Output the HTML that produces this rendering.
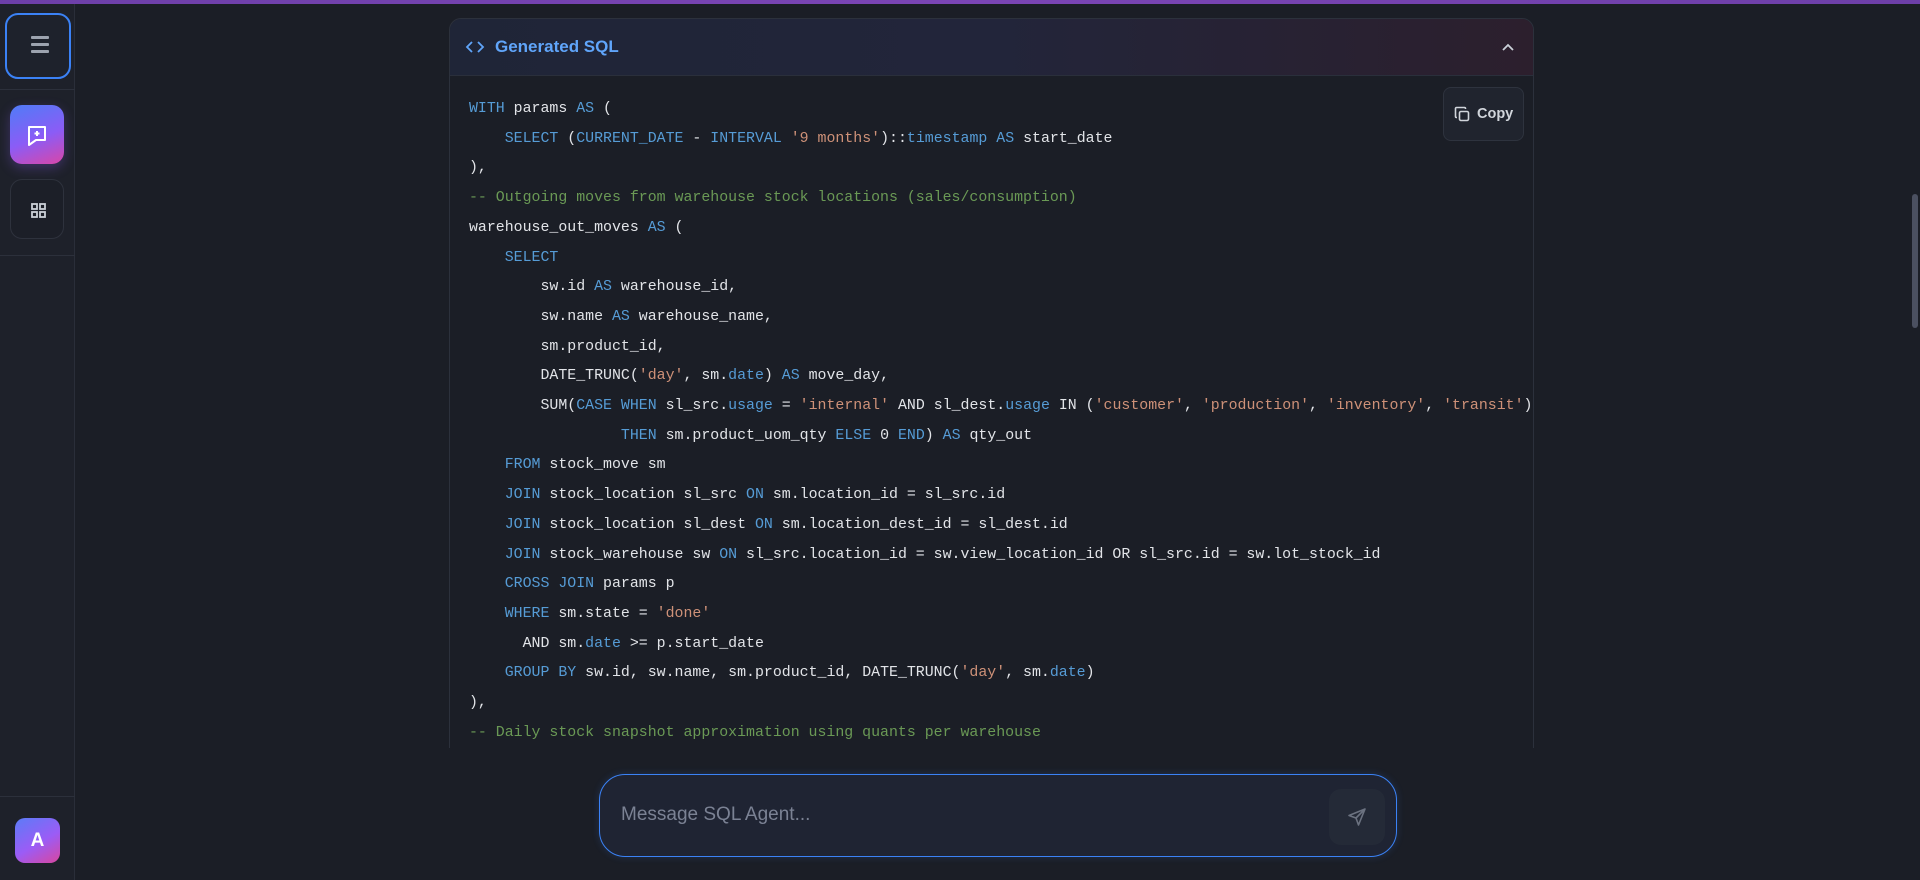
<!DOCTYPE html>
<html><head><meta charset="utf-8">
<style>
*{box-sizing:border-box;margin:0;padding:0}
html,body{width:1920px;height:880px;overflow:hidden;background:#1b1e26;font-family:"Liberation Sans",sans-serif}
.topbar{position:absolute;left:0;top:0;width:1920px;height:4px;background:linear-gradient(90deg,#6d3fa8,#7b45b5,#6d3fa8)}
.side{position:absolute;left:0;top:4px;width:75px;height:876px;background:#1e212a;border-right:1px solid #2a2e39}
.hb{position:absolute;left:5px;top:9px;width:66px;height:66px;border:2px solid #3b82f6;border-radius:13px;background:#1e222c}
.hb i{position:absolute;left:24px;width:18px;height:2.5px;background:#9ca3af;border-radius:1px}
.div{position:absolute;left:0;width:75px;height:1px;background:#2c303b}
.chat{position:absolute;left:10px;top:101px;width:54px;height:59px;border-radius:12px;background:linear-gradient(160deg,#4f7cf7,#8b5cf6 55%,#d946a8);box-shadow:0 4px 12px rgba(139,92,246,.3)}
.grid{position:absolute;left:10px;top:175px;width:54px;height:60px;border-radius:12px;border:1px solid #2e323d;background:#1c1f28}
.av{position:absolute;left:15px;top:814px;width:45px;height:45px;border-radius:10px;background:linear-gradient(150deg,#5b7cf7,#9b5cf6 55%,#d9469f);color:#fff;font-weight:bold;font-size:19px;text-align:center;line-height:45px}
.main{position:absolute;left:76px;top:4px;right:0;height:744px;overflow:hidden}
.card{position:absolute;left:373px;top:14px;width:1085px;height:900px;border:1px solid #2c313c;border-radius:12px;background:#1b1e26;overflow:hidden}
.head{height:57px;background:linear-gradient(90deg,#1f2537,#22253a 50%,#2c1f2d);border-bottom:1px solid #2a2f3b;position:relative}
.head .t{position:absolute;left:45px;top:18px;color:#60a5fa;font-size:17px;font-weight:bold}
.code{position:absolute;left:19px;top:76px;font-family:"Liberation Mono",monospace;font-size:14.9px;line-height:29.7px;color:#e2e4e8;white-space:pre}
.k{color:#569cd6}.s{color:#ce9178}.c{color:#6a9955}
.copy{position:absolute;left:993px;top:68px;width:81px;height:54px;border:1px solid #2e333e;border-radius:8px;background:#20242e;color:#d1d5db;font-size:14.5px;font-weight:bold}
.sb{position:absolute;right:0;top:4px;width:10px;height:744px;background:#1b1e26}
.thumb{position:absolute;right:2px;top:190px;width:6px;height:134px;background:#4b5060;border-radius:3px}
.inp{position:absolute;left:599px;top:774px;width:798px;height:83px;border:1.5px solid #3b82f6;border-radius:26px;background:#1f2433;box-shadow:0 0 8px rgba(59,130,246,.2)}
.inp span{position:absolute;left:21px;top:29px;color:#7b8294;font-size:19px}
.send{position:absolute;left:729px;top:14px;width:56px;height:56px;border-radius:12px;background:#242a37}
</style></head><body>
<div class="topbar"></div>
<div class="side">
 <div class="hb"><i style="top:21px"></i><i style="top:28px"></i><i style="top:35px"></i></div>
 <div class="div" style="top:85px"></div>
 <div class="chat"><svg width="54" height="59" viewBox="0 0 54 59"><path d="M19 22h16v13h-9l-7 5z" fill="none" stroke="#fff" stroke-width="2" stroke-linejoin="round"/><path d="M27 26v5M24.5 28.5h5" stroke="#fff" stroke-width="2"/></svg></div>
 <div class="grid"><svg width="54" height="60" viewBox="0 0 54 60"><g fill="none" stroke="#cbd0d8" stroke-width="1.8"><rect x="21" y="24" width="5" height="5"/><rect x="29" y="24" width="5" height="5"/><rect x="21" y="32" width="5" height="5"/><rect x="29" y="32" width="5" height="5"/></g></svg></div>
 <div class="div" style="top:251px"></div>
 <div class="div" style="top:792px"></div>
 <div class="av">A</div>
</div>
<div class="main">
 <div class="card">
  <div class="head">
   <svg style="position:absolute;left:15px;top:19px" width="20" height="18" viewBox="0 0 20 18"><path d="M7 4L2 9l5 5M13 4l5 5-5 5" fill="none" stroke="#60a5fa" stroke-width="1.8"/></svg>
   <div class="t">Generated SQL</div>
   <svg style="position:absolute;left:1050px;top:21px" width="16" height="14" viewBox="0 0 16 14"><path d="M3 10l5-5 5 5" fill="none" stroke="#cbd0d8" stroke-width="1.8"/></svg>
  </div>
<div class="code"><span class="k">WITH</span> params <span class="k">AS</span> (
    <span class="k">SELECT</span> (<span class="k">CURRENT_DATE</span> - <span class="k">INTERVAL</span> <span class="s">'9 months'</span>)::<span class="k">timestamp</span> <span class="k">AS</span> start_date
),
<span class="c">-- Outgoing moves from warehouse stock locations (sales/consumption)</span>
warehouse_out_moves <span class="k">AS</span> (
    <span class="k">SELECT</span>
        sw.id <span class="k">AS</span> warehouse_id,
        sw.name <span class="k">AS</span> warehouse_name,
        sm.product_id,
        DATE_TRUNC(<span class="s">'day'</span>, sm.<span class="k">date</span>) <span class="k">AS</span> move_day,
        SUM(<span class="k">CASE</span> <span class="k">WHEN</span> sl_src.<span class="k">usage</span> = <span class="s">'internal'</span> AND sl_dest.<span class="k">usage</span> IN (<span class="s">'customer'</span>, <span class="s">'production'</span>, <span class="s">'inventory'</span>, <span class="s">'transit'</span>)
                 <span class="k">THEN</span> sm.product_uom_qty <span class="k">ELSE</span> 0 <span class="k">END</span>) <span class="k">AS</span> qty_out
    <span class="k">FROM</span> stock_move sm
    <span class="k">JOIN</span> stock_location sl_src <span class="k">ON</span> sm.location_id = sl_src.id
    <span class="k">JOIN</span> stock_location sl_dest <span class="k">ON</span> sm.location_dest_id = sl_dest.id
    <span class="k">JOIN</span> stock_warehouse sw <span class="k">ON</span> sl_src.location_id = sw.view_location_id OR sl_src.id = sw.lot_stock_id
    <span class="k">CROSS JOIN</span> params p
    <span class="k">WHERE</span> sm.state = <span class="s">'done'</span>
      AND sm.<span class="k">date</span> &gt;= p.start_date
    <span class="k">GROUP BY</span> sw.id, sw.name, sm.product_id, DATE_TRUNC(<span class="s">'day'</span>, sm.<span class="k">date</span>)
),
<span class="c">-- Daily stock snapshot approximation using quants per warehouse</span>
</div>
  <div class="copy"><svg style="position:absolute;left:10px;top:18px" width="17" height="17" viewBox="0 0 17 17"><g fill="none" stroke="#d1d5db" stroke-width="1.6"><rect x="5.5" y="5.5" width="9" height="9" rx="1.5"/><path d="M3 11.5H2.5a1 1 0 0 1-1-1v-8a1 1 0 0 1 1-1h8a1 1 0 0 1 1 1V3"/></g></svg><span style="position:absolute;left:33px;top:18px">Copy</span></div>
 </div>
</div>
<div class="sb"><div class="thumb"></div></div>
<div class="inp"><span>Message SQL Agent...</span>
 <div class="send"><svg style="position:absolute;left:17px;top:17px" width="22" height="22" viewBox="0 0 22 22"><path d="M19 3L3 9.5l7 2.5 2.5 7z M10 12l9-9" fill="none" stroke="#6b7280" stroke-width="1.6" stroke-linejoin="round"/></svg></div>
</div>
</body></html>
